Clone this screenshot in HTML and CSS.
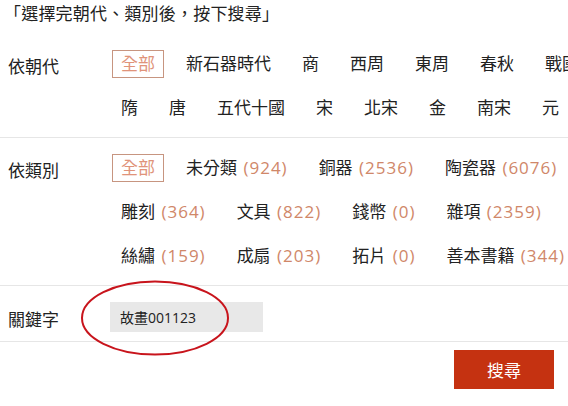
FILE: index.html
```html
<!DOCTYPE html>
<html lang="zh-Hant">
<head>
  <meta charset="UTF-8">
  <title>搜尋</title>
  <link rel="stylesheet" href="styles.css">
</head>
<body>
  <div class="page">
    <p class="hint">「選擇完朝代、類別後，按下搜尋」</p>

    <div class="row">
      <div class="label">依朝代</div>
      <ul class="options">
        <li class="active">全部</li>
        <li>新石器時代</li>
        <li>商</li>
        <li>西周</li>
        <li>東周</li>
        <li>春秋</li>
        <li>戰國</li>
        <li>隋</li>
        <li>唐</li>
        <li>五代十國</li>
        <li>宋</li>
        <li>北宋</li>
        <li>金</li>
        <li>南宋</li>
        <li>元</li>
      </ul>
    </div>

    <div class="row">
      <div class="label">依類別</div>
      <ul class="options">
        <li class="active">全部</li>
        <li>未分類 <span class="count">(924)</span></li>
        <li>銅器 <span class="count">(2536)</span></li>
        <li>陶瓷器 <span class="count">(6076)</span></li>
        <li>雕刻 <span class="count">(364)</span></li>
        <li>文具 <span class="count">(822)</span></li>
        <li>錢幣 <span class="count">(0)</span></li>
        <li>雜項 <span class="count">(2359)</span></li>
        <li>絲繡 <span class="count">(159)</span></li>
        <li>成扇 <span class="count">(203)</span></li>
        <li>拓片 <span class="count">(0)</span></li>
        <li>善本書籍 <span class="count">(344)</span></li>
      </ul>
    </div>

    <div class="row keyword-row">
      <div class="label">關鍵字</div>
      <div class="keyword">
        <input type="text" class="keyword-input" value="故畫001123">
        <svg class="circle" width="152" height="78" viewBox="0 0 152 78">
          <ellipse cx="76" cy="39" rx="73" ry="36.5" fill="none" stroke="#c8141c" stroke-width="2"/>
        </svg>
      </div>
    </div>

    <div class="actions">
      <button class="search-btn">搜尋</button>
    </div>
  </div>
</body>
</html>
```

FILE: styles.css
```css
* {
  margin: 0;
  padding: 0;
  box-sizing: border-box;
}

body {
  font-family: "Open Sans", "Noto Sans CJK TC", sans-serif;
  font-size: 17px;
  color: #222;
  background: #fff;
}

.page {
  width: 568px;
  height: 406px;
  overflow: hidden;
}

.hint {
  height: 34px;
  padding-left: 4px;
  line-height: 28px;
  letter-spacing: 0.2px;
}

.row {
  display: flex;
  width: 620px;
  padding: 16px 0 15px;
  border-bottom: 1px solid #e6e6e6;
}

.label {
  flex: none;
  width: 112px;
  padding-left: 8px;
  line-height: 34px;
}

.options {
  flex: none;
  width: 490px;
  list-style: none;
  display: flex;
  flex-wrap: wrap;
  column-gap: 13px;
  row-gap: 16px;
}

.options li {
  height: 28px;
  line-height: 26px;
  padding: 0 8px;
  border: 1px solid transparent;
  white-space: nowrap;
}

.options li.active {
  border-color: #c79580;
  color: #e0937a;
}

.count {
  margin-left: 2px;
  letter-spacing: 1px;
  color: #d08769;
}

.keyword-row {
  padding: 16px 0 6px;
}

.keyword-row .label {
  padding-top: 3px;
  line-height: 30px;
}

.keyword {
  position: relative;
}

.keyword-input {
  display: block;
  width: 153px;
  height: 30px;
  margin-left: -2px;
  padding: 0 10px;
  border: none;
  background: #e8e8e8;
  font-family: inherit;
  font-size: 14px;
  color: #222;
}

/* red annotation circle drawn over the field */
.circle {
  position: absolute;
  left: -33px;
  top: -23px;
  pointer-events: none;
}

.actions {
  display: flex;
  justify-content: flex-end;
  padding: 8px 14px 0 0;
}

.search-btn {
  width: 100px;
  height: 39px;
  border: none;
  background: #c53211;
  color: #fff;
  font-family: inherit;
  font-size: 17px;
  cursor: pointer;
}
```
